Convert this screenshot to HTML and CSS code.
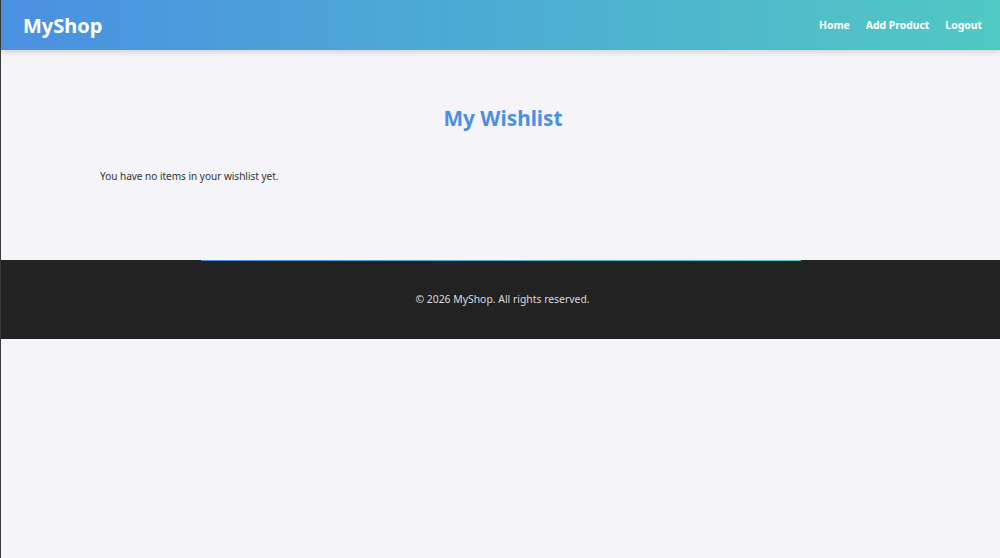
FILE: index.html
```html
<!DOCTYPE html>
<html lang="en">
<head>
<meta charset="utf-8">
<title>MyShop - Wishlist</title>
<link rel="stylesheet" href="styles.css">
</head>
<body>
<header class="site-header">
  <div class="logo">MyShop</div>
  <nav class="nav">
    <a href="#">Home</a>
    <a href="#">Add Product</a>
    <a href="#">Logout</a>
  </nav>
</header>
<main class="container">
  <h2 class="title">My Wishlist</h2>
  <p class="empty">You have no items in your wishlist yet.</p>
</main>
<footer class="site-footer">
  <p>&copy; 2026 MyShop. All rights reserved.</p>
</footer>
</body>
</html>
```
FILE: styles.css
```css
html, body {
  margin: 0;
  padding: 0;
  background: #f4f4f9;
  min-height: 100%;
}
body {
  font-family: "Noto Sans", "Open Sans", sans-serif;
  color: #333;
  border-left: 1px solid #3a3a3a;
  min-height: 558px;
  box-sizing: border-box;
}
.site-header {
  height: 50px;
  display: flex;
  align-items: center;
  justify-content: space-between;
  padding: 0 18px 0 22px;
  background: linear-gradient(90deg, #4a90e2, #50c9c3);
  box-shadow: 0 2px 6px rgba(0,0,0,0.15);
  position: relative;
  z-index: 1;
}
.logo {
  color: #fff;
  font-weight: 700;
  font-size: 20px;
}
.nav {
  display: flex;
  gap: 16px;
}
.nav a {
  color: #fff;
  text-decoration: none;
  font-weight: 700;
  font-size: 10.4px;
}
.container {
  max-width: 801px;
  margin: 0 auto;
  padding: 53px 0 74px;
  box-sizing: border-box;
}
.title {
  margin: 0 0 33px;
  padding-left: 5px;
  text-align: center;
  color: #4a90e2;
  font-size: 20.8px;
  line-height: 30px;
  font-weight: 700;
}
.empty {
  margin: 0;
  font-size: 10px;
  line-height: 20px;
  color: #333;
}
.site-footer {
  position: relative;
  background: #222;
  color: #ddd;
  text-align: center;
  padding: 30px 0;
}
.site-footer::before {
  content: "";
  position: absolute;
  top: 0;
  left: 50%;
  transform: translateX(-50%);
  width: 600px;
  height: 1px;
  background: linear-gradient(90deg, #4a90e2, #50c9c3);
}
.site-footer p {
  margin: 0;
  padding-left: 4px;
  font-size: 10.4px;
  line-height: 19px;
}
```
